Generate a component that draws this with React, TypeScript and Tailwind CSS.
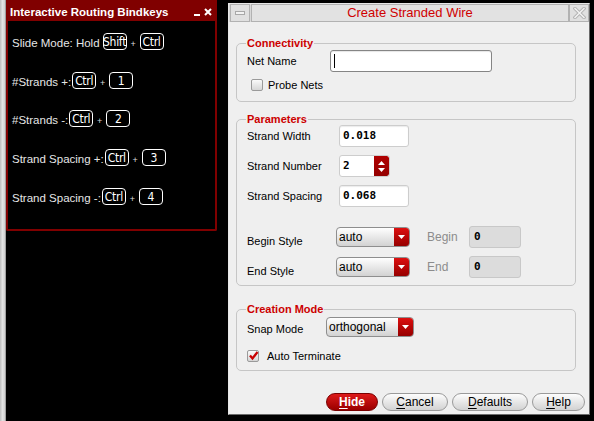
import React from "react";

function Key({ children }: { children: React.ReactNode }) {
  return (
    <span className="inline-flex h-[17px] w-[24px] shrink-0 items-center justify-center rounded-[4px] border border-white bg-black pt-[1px] font-['Liberation_Sans_Narrow','DejaVu_Sans_Condensed','Liberation_Sans',sans-serif] text-[12px] leading-none tracking-[-0.3px] text-white">
      {children}
    </span>
  );
}

function Plus() {
  return (
    <span className="mb-[1px] w-[13px] shrink-0 text-center text-[9px] leading-[9px] text-[#dcdcdc]">+</span>
  );
}

function Group({
  title,
  className,
  children,
}: {
  title: string;
  className?: string;
  children: React.ReactNode;
}) {
  return (
    <div className={`relative w-[340px] rounded-[5px] border border-[#c6c6c6] pl-[10px] ${className ?? ""}`}>
      <span className="absolute left-[9px] top-[-8px] bg-[#efefef] px-[1px] text-[11px] font-bold leading-[14px] text-[#cc0000]">
        {title}
      </span>
      {children}
    </div>
  );
}

function Dropdown({ value, w }: { value: string; w: string }) {
  return (
    <div className={`flex h-[20px] ${w} overflow-hidden rounded-[4px] border border-[#8e8e8e] bg-linear-to-b from-[#ffffff] to-[#d2d2d2]`}>
      <span className="flex-1 pl-[2px] text-[12px] leading-[18px] text-black">{value}</span>
      <span className="flex w-[15px] items-center justify-center bg-linear-to-b from-[#dd1010] to-[#960000]">
        <svg width="7" height="4" viewBox="0 0 7 4">
          <path d="M0 0H7L3.5 4Z" fill="white" />
        </svg>
      </span>
    </div>
  );
}

function Field({ value, w }: { value: string; w: string }) {
  return (
    <div className={`flex h-[22px] ${w} items-center rounded-[3px] border border-[#cdcdcd] bg-white pl-[3px] font-['DejaVu_Sans_Mono',monospace] text-[11px] font-bold text-black shadow-[inset_0_1px_1px_rgba(0,0,0,0.08)]`}>
      {value}
    </div>
  );
}

function DisabledField({ value }: { value: string }) {
  return (
    <div className="flex h-[22px] w-[52px] items-center rounded-[3px] border border-[#c8c8c8] bg-[#dcdcdc] pl-[4px] font-['DejaVu_Sans_Mono',monospace] text-[11px] font-bold text-black">
      {value}
    </div>
  );
}

function Btn({
  first,
  rest,
  w,
  primary,
}: {
  first: string;
  rest: string;
  w: string;
  primary?: boolean;
}) {
  return (
    <div
      className={`flex h-[18px] ${w} items-center justify-center rounded-full border text-[12px] leading-none ${
        primary
          ? "border-[#7a0000] bg-linear-to-b from-[#de1a1a] to-[#9a0000] font-bold text-white"
          : "border-[#9a9a9a] bg-linear-to-b from-[#fdfdfd] to-[#d2d2d2] text-black"
      }`}
    >
      <span className="underline underline-offset-[2px]">{first}</span>
      <span>{rest}</span>
    </div>
  );
}

export default function App() {
  return (
    <div className="flex h-[421px] w-[594px] items-start overflow-hidden bg-black font-['Liberation_Sans',Arial,sans-serif]">
      {/* left strip */}
      <div className="h-full w-[6px] shrink-0 border-r border-[#a0a0a0] bg-linear-to-r from-[#bdbdbd] via-[#e2e2e2] to-[#cfcfcf]" />

      {/* Bindkeys panel */}
      <div className="flex h-[231px] w-[211px] shrink-0 flex-col">
        <div className="flex h-[21px] items-center justify-between bg-[#800000] pl-[4px] pr-[5px] pt-[2px]">
          <span className="text-[11.5px] font-bold leading-[14px] text-white">Interactive Routing Bindkeys</span>
          <div className="flex items-center gap-[4px]">
            <span className="mt-[7px] h-[2px] w-[6px] bg-white" />
            <svg width="8" height="8" viewBox="0 0 8 8">
              <path d="M1 1L7 7M7 1L1 7" stroke="white" strokeWidth="2" />
            </svg>
          </div>
        </div>
        <div className="flex flex-1 flex-col rounded-b-[2px] border-x-2 border-b-2 border-[#800000] pl-[4px] pt-[12px] text-[11.5px] leading-[13px] text-[#e6e6e6]">
          <div className="flex h-[17px] items-end">
            <span>Slide Mode: Hold</span>
            <span className="w-[3px]" />
            <Key>Shift</Key>
            <Plus />
            <Key>Ctrl</Key>
          </div>
          <div className="mt-[22px] flex h-[17px] items-end">
            <span>#Strands +:</span>
            <span className="w-[1px]" />
            <Key>Ctrl</Key>
            <Plus />
            <Key>1</Key>
          </div>
          <div className="mt-[21px] flex h-[17px] items-end">
            <span>#Strands -:</span>
            <span className="w-[1px]" />
            <Key>Ctrl</Key>
            <Plus />
            <Key>2</Key>
          </div>
          <div className="mt-[22px] flex h-[17px] items-end">
            <span>Strand Spacing +:</span>
            <span className="w-[1px]" />
            <Key>Ctrl</Key>
            <Plus />
            <Key>3</Key>
          </div>
          <div className="mt-[22px] flex h-[17px] items-end">
            <span>Strand Spacing -:</span>
            <span className="w-[1px]" />
            <Key>Ctrl</Key>
            <Plus />
            <Key>4</Key>
          </div>
        </div>
      </div>

      {/* Dialog */}
      <div className="ml-[11px] mt-[3px] flex h-[412px] w-[362px] shrink-0 flex-col border border-l-[#e8e8e8] border-t-[#e8e8e8] border-r-[#6a6a6a] border-b-[#6a6a6a] bg-[#efefef]">
        {/* title bar */}
        <div className="flex h-[18px] shrink-0 bg-[#d8d8d8] pl-[1px]">
          <div className="flex w-[20px] items-center justify-center border border-[#b2b2b2] bg-[#e0e0e0]">
            <span className="h-[4px] w-[10px] border border-[#a8a8a8] bg-[#f2f2f2]" />
          </div>
          <div className="ml-[1px] flex flex-1 items-center justify-center border border-[#b2b2b2] bg-[#e2e2e2] text-[13px] leading-[16px] text-[#d00000]">
            Create Stranded Wire
          </div>
          <div className="flex w-[20px] items-center justify-center border border-[#b2b2b2] bg-[#e0e0e0]">
            <svg width="13" height="12" viewBox="0 0 13 12">
              <path d="M2 1.5L11 10.5M11 1.5L2 10.5" stroke="#b4b4b4" strokeWidth="3.4" strokeLinecap="square" />
              <path d="M2 1.5L11 10.5M11 1.5L2 10.5" stroke="#f4f4f4" strokeWidth="1.4" strokeLinecap="square" />
            </svg>
          </div>
        </div>

        {/* body */}
        <div className="flex flex-1 flex-col pl-[7px] pt-[21px] text-[11px] text-black">
          <Group title="Connectivity" className="h-[59px] pt-[6px]">
            <div className="flex h-[22px] items-center">
              <span className="w-[83px]">Net Name</span>
              <div className="flex h-[22px] w-[162px] items-center rounded-[3px] border border-[#858585] bg-white pl-[3px] shadow-[inset_0_1px_1px_rgba(0,0,0,0.1)]">
                <span className="h-[14px] w-[1px] bg-black" />
              </div>
            </div>
            <div className="mt-[6px] flex h-[14px] items-center pl-[4px]">
              <span className="h-[12px] w-[12px] rounded-[2px] border border-[#9a9a9a] bg-linear-to-b from-[#fafafa] to-[#d6d6d6]" />
              <span className="ml-[5px]">Probe Nets</span>
            </div>
          </Group>

          <Group title="Parameters" className="mt-[17px] h-[167px] pt-[5px]">
            <div className="flex h-[22px] items-center">
              <span className="w-[92px]">Strand Width</span>
              <Field value="0.018" w="w-[70px]" />
            </div>
            <div className="mt-[8px] flex h-[22px] items-center">
              <span className="w-[92px]">Strand Number</span>
              <div className="flex h-[22px] w-[51px] overflow-hidden rounded-[3px] border border-[#cdcdcd] bg-white">
                <span className="flex flex-1 items-center pl-[3px] font-['DejaVu_Sans_Mono',monospace] text-[11px] font-bold">2</span>
                <span className="flex w-[15px] flex-col items-center justify-center gap-[3px] rounded-r-[2px] bg-linear-to-b from-[#b00000] to-[#940000]">
                  <svg width="7" height="4" viewBox="0 0 7 4">
                    <path d="M0 4H7L3.5 0Z" fill="white" />
                  </svg>
                  <svg width="7" height="4" viewBox="0 0 7 4">
                    <path d="M0 0H7L3.5 4Z" fill="white" />
                  </svg>
                </span>
              </div>
            </div>
            <div className="mt-[8px] flex h-[22px] items-center">
              <span className="w-[92px]">Strand Spacing</span>
              <Field value="0.068" w="w-[70px]" />
            </div>
            <div className="mt-[19px] flex h-[22px] items-center">
              <span className="w-[89px] pt-[8px]">Begin Style</span>
              <Dropdown value="auto" w="w-[74px]" />
              <span className="ml-[17px] w-[42px] text-[12px] text-[#8c8c8c]">Begin</span>
              <DisabledField value="0" />
            </div>
            <div className="mt-[8px] flex h-[22px] items-center">
              <span className="w-[89px] pt-[8px]">End Style</span>
              <Dropdown value="auto" w="w-[74px]" />
              <span className="ml-[17px] w-[42px] text-[12px] text-[#8c8c8c]">End</span>
              <DisabledField value="0" />
            </div>
          </Group>

          <Group title="Creation Mode" className="mt-[23px] h-[62px] pt-[7px]">
            <div className="flex h-[20px] items-center">
              <span className="w-[79px] pt-[5px]">Snap Mode</span>
              <Dropdown value="orthogonal" w="w-[88px]" />
            </div>
            <div className="mt-[12px] flex h-[14px] items-center">
              <span className="relative h-[12px] w-[12px] rounded-[2px] border border-[#9a9a9a] bg-linear-to-b from-[#fafafa] to-[#d6d6d6]">
                <svg className="absolute left-[0px] top-[-1px]" width="11" height="11" viewBox="0 0 11 11">
                  <path d="M2 5.5L4.5 8.5L9.5 2" stroke="#c80000" strokeWidth="2.3" fill="none" />
                </svg>
              </span>
              <span className="ml-[8px]">Auto Terminate</span>
            </div>
          </Group>

          <div className="mt-[22px] flex w-[349px] justify-end gap-[4px]">
            <Btn first="H" rest="ide" w="w-[52px]" primary />
            <Btn first="C" rest="ancel" w="w-[66px]" />
            <Btn first="D" rest="efaults" w="w-[76px]" />
            <Btn first="H" rest="elp" w="w-[53px]" />
          </div>
        </div>
      </div>
    </div>
  );
}
